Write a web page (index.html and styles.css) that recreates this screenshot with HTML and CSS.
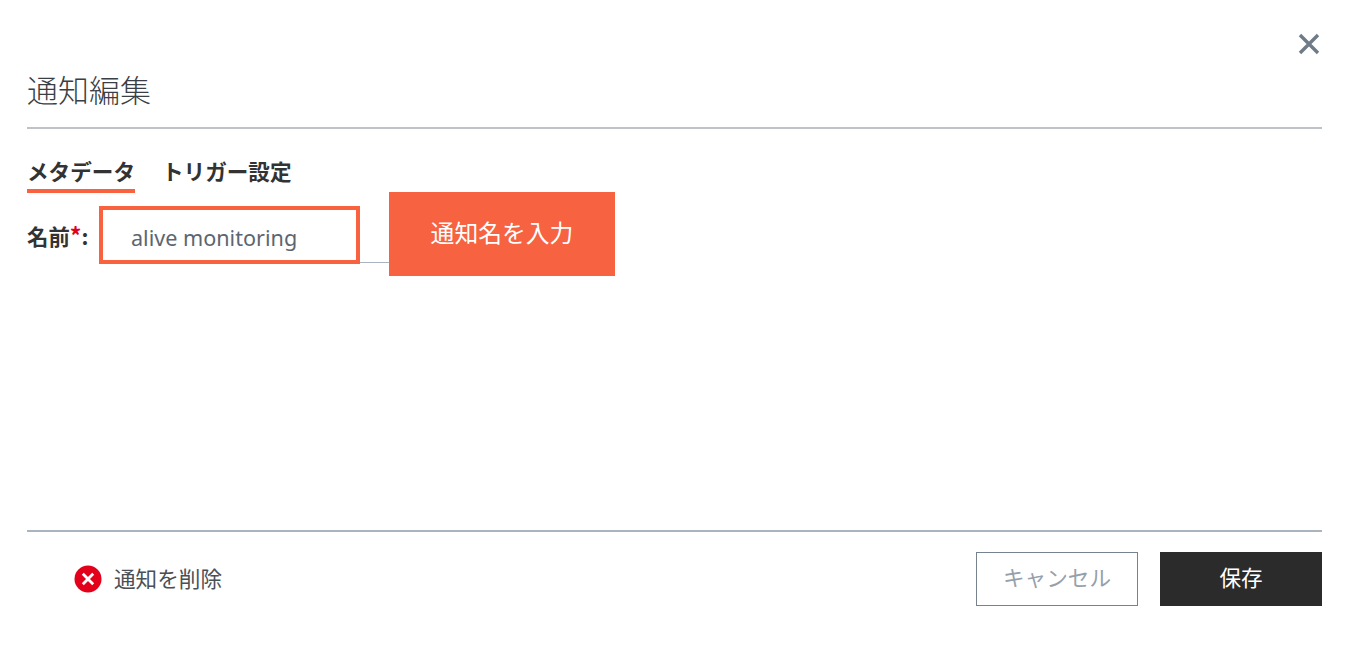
FILE: index.html
```html
<!DOCTYPE html>
<html lang="ja">
<head>
<meta charset="utf-8">
<title>通知編集</title>
<link rel="stylesheet" href="styles.css">
</head>
<body>
<div class="dialog">
  <div class="close-row">
    <button class="close" aria-label="閉じる">
      <svg width="22" height="22" viewBox="0 0 22 22"><path d="M2 2 L20 20 M20 2 L2 20" stroke="#6f7b88" stroke-width="3.4" fill="none"/></svg>
    </button>
  </div>
  <h1 class="title">通知編集</h1>
  <nav class="tabs">
    <span class="tab active">メタデータ</span>
    <span class="tab">トリガー設定</span>
  </nav>
  <div class="field">
    <label class="label">名前<span class="req">*</span>:</label>
    <div class="input-wrap">
      <div class="input">alive monitoring</div>
      <div class="callout">通知名を入力</div>
    </div>
  </div>
  <div class="spacer"></div>
  <footer class="footer">
    <a class="delete">
      <svg width="28" height="28" viewBox="0 0 28 28"><circle cx="14" cy="14" r="13.5" fill="#e2001a"/><path d="M8.8 8.8 L19.2 19.2 M19.2 8.8 L8.8 19.2" stroke="#fff" stroke-width="2.8" fill="none"/></svg>
      <span class="delete-text">通知を削除</span>
    </a>
    <div class="actions">
      <button class="btn cancel">キャンセル</button>
      <button class="btn save">保存</button>
    </div>
  </footer>
</div>
</body>
</html>
```
FILE: styles.css
```css
* { box-sizing: border-box; }
html, body { margin: 0; height: 100%; background: #fff; }
body { font-family: "Noto Sans", "Noto Sans CJK JP", sans-serif; color: #333; overflow: hidden; }
.dialog { width: 1350px; height: 670px; padding: 33px 28px 64px 27px; display: flex; flex-direction: column; }
.close-row { display: flex; justify-content: flex-end; height: 23px; padding-right: 2px; }
.close { border: 0; background: none; padding: 0; width: 22px; height: 22px; display: block; }
.title { margin: 0; font-weight: 300; font-size: 31px; line-height: 66px; height: 73px; font-family: "Noto Sans CJK JP", sans-serif; color: #3a3f45; border-bottom: 2px solid #bfc3c8; }
.tabs { display: flex; gap: 27px; margin-top: 28px; height: 36px; }
.tab { font-family: "Noto Sans CJK JP", sans-serif; font-weight: 700; font-size: 21.6px; line-height: 28px; height: 36px; color: #333; }
.tab.active { border-bottom: 4px solid #f9623f; }
.field { display: flex; align-items: flex-start; margin-top: 13px; }
.label { font-family: "Noto Sans CJK JP", sans-serif; font-weight: 700; font-size: 21.4px; line-height: 60px; width: 72px; color: #333; white-space: nowrap; }
.req { color: #e2001a; font-size: 23px; line-height: 20px; }
.input-wrap { position: relative; width: 290px; height: 57px; border-bottom: 1px solid #aab4c0; }
.input { width: 261px; height: 58px; border: 4px solid #f9623f; background: #fff; padding: 0 28px; font-size: 21.6px; line-height: 56px; color: #5c6670; }
.callout { position: absolute; left: 290px; top: -14px; width: 226px; height: 84px; padding-bottom: 6px; background: #f76241; color: #fff; font-family: "Noto Sans CJK JP", sans-serif; font-size: 23.8px; display: flex; align-items: center; justify-content: center; }
.spacer { flex: 1; }
.footer { border-top: 2px solid #aab4c0; padding-top: 20px; display: flex; justify-content: space-between; align-items: center; height: 76px; }
.delete { display: flex; align-items: center; gap: 12px; margin-left: 47px; font-family: "Noto Sans CJK JP", sans-serif; font-size: 21.6px; color: #4a4f55; }
.delete-text { padding-bottom: 3px; }
.actions { display: flex; gap: 22px; }
.btn { width: 162px; height: 54px; font-family: "Noto Sans CJK JP", sans-serif; font-size: 21.6px; padding: 0 0 5px; }
.cancel { background: #fff; border: 1px solid #76828e; color: #97a0aa; }
.save { background: #2b2b2b; border: 0; color: #fff; }
```
